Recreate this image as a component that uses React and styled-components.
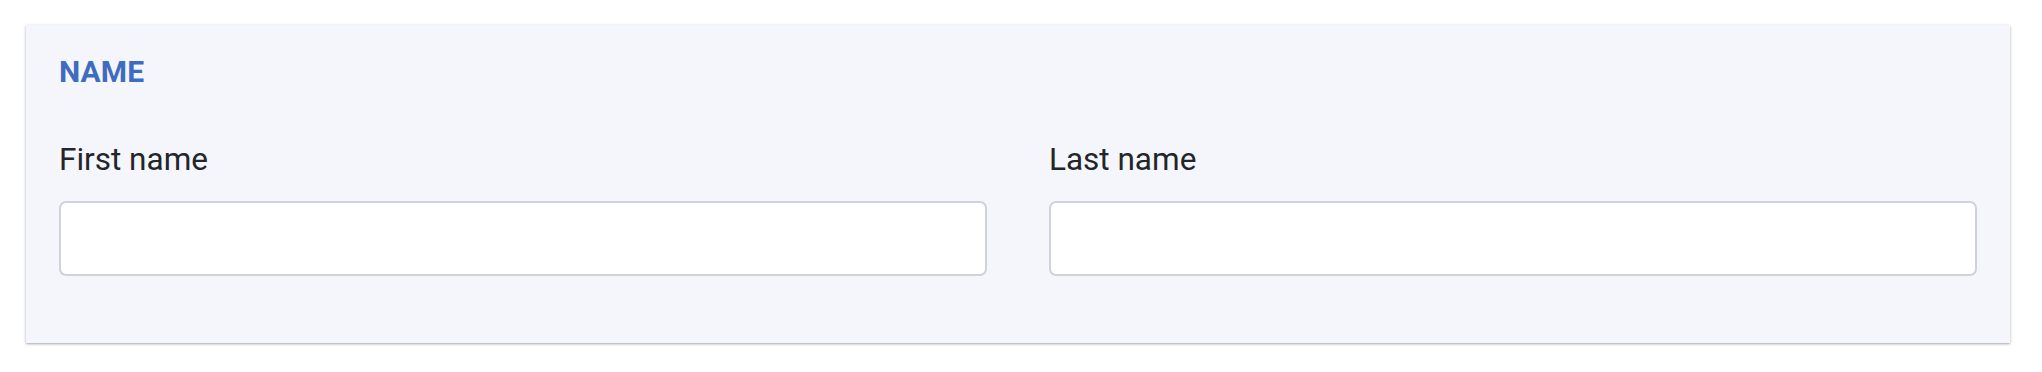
import styled, { createGlobalStyle } from "styled-components";

const GlobalStyle = createGlobalStyle`
  body {
    margin: 0;
    background: #ffffff;
    font-family: Roboto, "Liberation Sans", sans-serif;
  }
`;

const Page = styled.div`
  padding: 25px 32px 32px 26px;
`;

const Section = styled.section`
  background: #f5f6fb;
  box-shadow: 0 1px 3px rgba(0, 0, 0, 0.28), 0 1px 1px rgba(0, 0, 0, 0.08);
  padding: 27px 33px 67px 33px;
`;

const SectionTitle = styled.h2`
  margin: 0 0 50px 0;
  font-size: 30px;
  line-height: 40px;
  font-weight: 700;
  color: #3f6cbf;
  letter-spacing: 0.1px;
`;

const FieldRow = styled.div`
  display: grid;
  grid-template-columns: 1fr 1fr;
  column-gap: 62px;
`;

const Field = styled.label`
  display: flex;
  flex-direction: column;
  gap: 23px;
`;

const FieldLabel = styled.span`
  font-size: 31.5px;
  line-height: 36px;
  color: #22252a;
`;

const TextInput = styled.input`
  box-sizing: border-box;
  height: 75px;
  width: 100%;
  border: 2px solid #cfd2da;
  border-radius: 7px;
  background: #ffffff;
  font-family: inherit;
  font-size: 28px;
  padding: 0 16px;
  outline: none;
`;

const App = () => {
  return (
    <Page>
      <GlobalStyle />
      <Section>
        <SectionTitle>NAME</SectionTitle>
        <FieldRow>
          <Field>
            <FieldLabel>First name</FieldLabel>
            <TextInput type="text" />
          </Field>
          <Field>
            <FieldLabel>Last name</FieldLabel>
            <TextInput type="text" />
          </Field>
        </FieldRow>
      </Section>
    </Page>
  );
};

export default App;
